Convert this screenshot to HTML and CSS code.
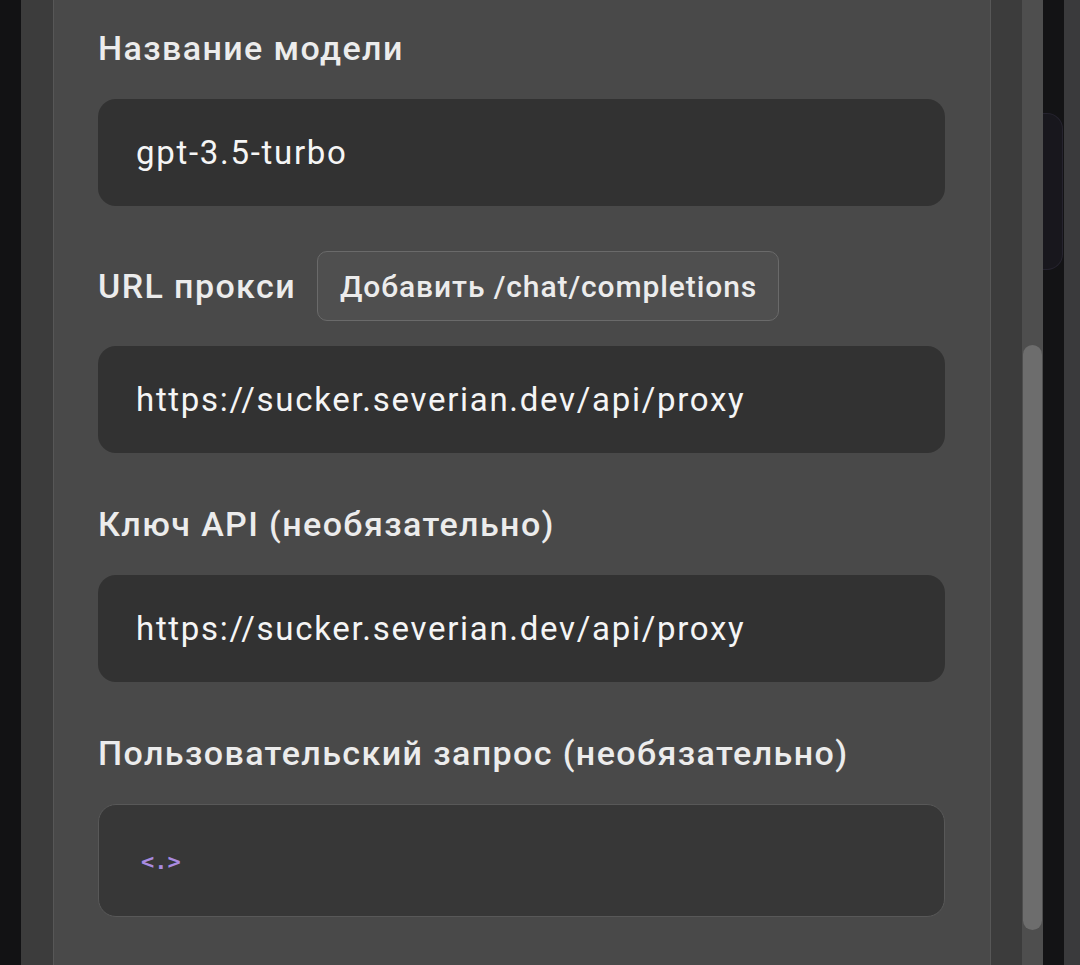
FILE: index.html
```html
<!DOCTYPE html>
<html lang="ru">
<head>
<meta charset="utf-8">
<title>Настройки модели</title>
<link rel="stylesheet" href="styles.css">
</head>
<body>
<div class="screen">
  <div class="edge-left"></div>
  <div class="gutter"></div>
  <main class="panel">
    <section class="field">
      <div class="field-head"><label class="label">Название модели</label></div>
      <div class="input">gpt-3.5-turbo</div>
    </section>
    <section class="field">
      <div class="field-head with-action">
        <label class="label">URL прокси</label>
        <button class="chip">Добавить /chat/completions</button>
      </div>
      <div class="input">https://sucker.severian.dev/api/proxy</div>
    </section>
    <section class="field">
      <div class="field-head"><label class="label">Ключ API (необязательно)</label></div>
      <div class="input">https://sucker.severian.dev/api/proxy</div>
    </section>
    <section class="field">
      <div class="field-head"><label class="label">Пользовательский запрос (необязательно)</label></div>
      <div class="editor"><span class="placeholder">&lt;.&gt;</span></div>
    </section>
  </main>
  <div class="gutter gutter-right"></div>
  <div class="scrollbar"><div class="thumb"></div></div>
  <div class="edge-dark"><div class="ghost"></div></div>
  <div class="edge-far"></div>
</div>
</body>
</html>
```
FILE: styles.css
```css
html, body {
  margin: 0;
  padding: 0;
  background: #121214;
}
.screen {
  display: flex;
  width: 1080px;
  height: 965px;
  overflow: hidden;
  font-family: Roboto, "Noto Sans", sans-serif;
}
.edge-left {
  width: 21px;
  background: #121214;
  flex: none;
}
.gutter {
  width: 32px;
  background: #3c3c3c;
  flex: none;
}
.gutter-right {
  width: 31px;
}
.panel {
  width: 938px;
  flex: none;
  box-sizing: border-box;
  background: #494949;
  border-left: 1px solid #575757;
  border-right: 1px solid #575757;
  padding: 28px 45px 0 44px;
  display: flex;
  flex-direction: column;
}
.field {
  display: flex;
  flex-direction: column;
  margin-bottom: 51px;
}
.field-head {
  display: flex;
  align-items: center;
  gap: 21px;
  height: 40px;
  margin-bottom: 31px;
}
.field-head.with-action {
  height: 70px;
  margin-top: -6px;
  margin-bottom: 25px;
}
.label {
  font-size: 34px;
  font-weight: 500;
  letter-spacing: 1.4px;
  color: #ececec;
  line-height: 40px;
  white-space: nowrap;
}
.chip {
  height: 70px;
  padding: 0 21px 0 22px;
  border: 1px solid #6a6a6a;
  border-radius: 10px;
  background: #4f4f4f;
  color: #ececec;
  font-family: Roboto, "Noto Sans", sans-serif;
  font-size: 30px;
  font-weight: 500;
  letter-spacing: 0.9px;
  white-space: nowrap;
}
.input {
  height: 107px;
  box-sizing: border-box;
  background: #323232;
  border-radius: 18px;
  padding: 0 38px;
  display: flex;
  align-items: center;
  font-size: 33px;
  letter-spacing: 1.7px;
  color: #f5f5f5;
}
.editor {
  height: 113px;
  box-sizing: border-box;
  background: #373737;
  border: 1px solid #585858;
  border-radius: 18px;
  padding: 2px 42px 0;
  display: flex;
  align-items: center;
}
.placeholder {
  font-family: "DejaVu Sans Mono", monospace;
  font-size: 22px;
  font-weight: 600;
  color: #a98be0;
}
.scrollbar {
  width: 21px;
  flex: none;
  background: #4e4e4e;
  padding-top: 345px;
  box-sizing: border-box;
}
.thumb {
  width: 19px;
  margin-left: 1px;
  height: 585px;
  border-radius: 10px;
  background: #6d6d6d;
}
.edge-dark {
  width: 21px;
  flex: none;
  background: #131315;
  padding-top: 113px;
  box-sizing: border-box;
}
.ghost {
  width: 19px;
  height: 155px;
  background: #18171d;
  border: 1px solid #25232e;
  border-left: none;
  border-radius: 0 16px 16px 0;
}
.edge-far {
  flex: 1;
  background: #3a3a3c;
}
```
